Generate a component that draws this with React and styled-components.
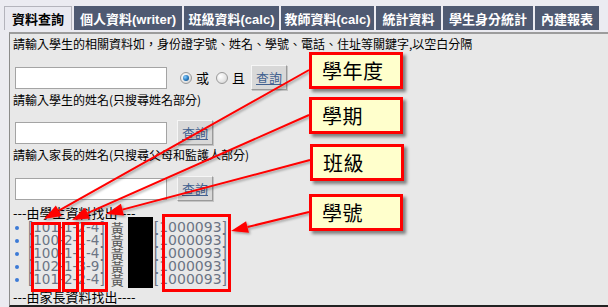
import React from "react";
import styled, { createGlobalStyle } from "styled-components";

const GlobalStyle = createGlobalStyle`
  html, body { margin: 0; padding: 0; background: #e6e6ea; }
  body { font-family: "Noto Sans CJK TC", "Liberation Sans", sans-serif; }
`;

const Page = styled.div`
  position: relative;
  width: 608px;
  height: 307px;
  overflow: hidden;
  background: #ebebf1;
  display: flex;
  flex-direction: column;
`;

const TabBar = styled.div`
  display: flex;
  gap: 2px;
  padding: 6px 0 0 4px;
  height: 24px;
`;

const Tab = styled.div`
  width: ${(p) => p.$w}px;
  height: 24px;
  box-sizing: border-box;
  display: flex;
  align-items: center;
  justify-content: center;
  font-family: "Liberation Sans", "Noto Sans CJK TC", sans-serif;
  font-weight: 700;
  font-size: 13px;
  white-space: nowrap;
  background: ${(p) => (p.$active ? "#e9e9f0" : "#4f5a72")};
  color: ${(p) => (p.$active ? "#000" : "#fff")};
  border: 1px solid ${(p) => (p.$active ? "#b4b4bc" : "#4f5a72")};
  border-bottom: none;
`;

const Panel = styled.div`
  flex: 1;
  margin: 2px 0 0 9px;
  border-left: 1px solid #8c8c8c;
  border-top: 2px solid #9c9c9c;
  border-bottom: 2px solid #222;
  background: #e8e8e8;
  padding: 2px 0 0 3px;
  font-size: 12px;
  line-height: 16px;
  color: #000;
`;

const Line = styled.div`
  margin-top: ${(p) => p.$mt || 0}px;
  white-space: nowrap;
`;

const SearchRow = styled.div`
  display: flex;
  align-items: center;
  height: 25px;
  margin-top: ${(p) => p.$mt}px;
`;

const TextBox = styled.div`
  width: 152px;
  height: 22px;
  box-sizing: border-box;
  margin-left: 2px;
  background: #fff;
  border: 1px solid #a4a4a4;
`;

const Radio = styled.span`
  display: inline-block;
  width: 12px;
  height: 12px;
  box-sizing: border-box;
  border-radius: 50%;
  border: 1px solid #9a9a9a;
  background: radial-gradient(circle at 35% 35%, #ffffff 0%, #e4e4e4 60%, #c4c4c4 100%);
  margin-left: ${(p) => p.$ml}px;
  position: relative;
  &::after {
    content: "";
    display: ${(p) => (p.$checked ? "block" : "none")};
    position: absolute;
    left: 2px;
    top: 2px;
    width: 6px;
    height: 6px;
    border-radius: 50%;
    background: radial-gradient(circle at 35% 35%, #8fd0ff 0%, #2c7fc4 50%, #0b3f70 100%);
  }
`;

const RadioLabel = styled.span`
  margin-left: 4px;
  font-size: 13px;
`;

const QueryButton = styled.div`
  width: 36px;
  height: 25px;
  box-sizing: border-box;
  margin-left: ${(p) => p.$ml}px;
  display: flex;
  align-items: center;
  justify-content: center;
  background: #d8d8d8;
  border: 1px solid;
  border-color: #f6f6f6 #9a9a9a #9a9a9a #f6f6f6;
  box-shadow: 1px 1px 0 #c4c4c4;
  color: #41608f;
  font-size: 13px;
  text-decoration: underline;
`;

const Heading = styled.div`
  margin-top: ${(p) => p.$mt}px;
  font-size: 13px;
  line-height: 16px;
  white-space: nowrap;
`;

const List = styled.div`
  display: flex;
  flex-direction: column;
`;

const ListRow = styled.div`
  display: flex;
  align-items: center;
  height: 13px;
  line-height: 13px;
  white-space: nowrap;
  font-family: "DejaVu Sans", "Noto Sans CJK TC", sans-serif;
  color: #6b7484;
`;

const Dot = styled.span`
  width: 4px;
  height: 4px;
  border-radius: 50%;
  background: #3c7ad6;
  margin: 0 9px 0 2px;
  flex: none;
`;

const Code = styled.span`
  font-size: ${(p) => p.$size}px;
`;

const Name = styled.span`
  margin-left: 6px;
  font-family: "Noto Sans CJK TC", sans-serif;
  font-size: 13px;
  color: #555;
`;

const NameHidden = styled.span`
  display: inline-block;
  width: 30px;
  flex: none;
`;

const Redaction = styled.div`
  position: absolute;
  left: 128px;
  top: 217px;
  width: 25px;
  height: 71px;
  background: #000;
`;

const RedFrame = styled.div`
  position: absolute;
  box-sizing: border-box;
  border: 3px solid #ff0000;
  left: ${(p) => p.$x}px;
  top: ${(p) => p.$y}px;
  width: ${(p) => p.$w}px;
  height: ${(p) => p.$h}px;
`;

const Callout = styled.div`
  position: absolute;
  box-sizing: border-box;
  left: ${(p) => p.$x}px;
  top: ${(p) => p.$y}px;
  width: 94px;
  height: 37px;
  border: 3px solid #ff0000;
  background: #ffffcc;
  box-shadow: 3px 3px 3px rgba(0, 0, 0, 0.45);
  padding-left: 10px;
  display: flex;
  align-items: center;
  font-family: "Noto Sans CJK TC", serif;
  font-size: 20px;
  color: #000;
  letter-spacing: 0.5px;
`;

const ArrowLayer = styled.svg`
  position: absolute;
  left: 0;
  top: 0;
  pointer-events: none;
`;

const tabs = [
  { label: "資料查詢", w: 68, active: true },
  { label: "個人資料(writer)", w: 108 },
  { label: "班級資料(calc)", w: 95 },
  { label: "教師資料(calc)", w: 93 },
  { label: "統計資料", w: 65 },
  { label: "學生身分統計", w: 90 },
  { label: "內建報表", w: 64 },
];

const rows = ["101-1-2-4", "100-2-1-4", "100-1-1-4", "102-1-3-9", "101-2-2-4"];

const arrows = [
  { x1: 309, y1: 70, x2: 44, y2: 219 },
  { x1: 309, y1: 115, x2: 72, y2: 220 },
  { x1: 310, y1: 160, x2: 106, y2: 214 },
  { x1: 309, y1: 212, x2: 231, y2: 231 },
];

function Arrow({ x1, y1, x2, y2 }) {
  const ang = Math.atan2(y2 - y1, x2 - x1);
  const len = 17;
  const half = 6;
  const bx = x2 - len * Math.cos(ang);
  const by = y2 - len * Math.sin(ang);
  const px = -Math.sin(ang) * half;
  const py = Math.cos(ang) * half;
  const pts = `${x2},${y2} ${bx + px},${by + py} ${bx - px},${by - py}`;
  return (
    <g filter="url(#shadow)">
      <line x1={x1} y1={y1} x2={bx} y2={by} stroke="#ff0000" strokeWidth="2" />
      <polygon points={pts} fill="#ff0000" />
    </g>
  );
}

export default function App() {
  return (
    <>
      <GlobalStyle />
      <Page>
        <TabBar>
          {tabs.map((t) => (
            <Tab key={t.label} $w={t.w} $active={t.active}>
              {t.label}
            </Tab>
          ))}
        </TabBar>
        <Panel>
          <Line>請輸入學生的相關資料如，身份證字號、姓名、學號、電話、住址等關鍵字,以空白分隔</Line>
          <SearchRow $mt={13}>
            <TextBox />
            <Radio $ml={13} $checked />
            <RadioLabel>或</RadioLabel>
            <Radio $ml={7} />
            <RadioLabel>且</RadioLabel>
            <QueryButton $ml={6}>查詢</QueryButton>
          </SearchRow>
          <Line $mt={2}>請輸入學生的姓名(只搜尋姓名部分)</Line>
          <SearchRow $mt={12}>
            <TextBox />
            <QueryButton $ml={10}>查詢</QueryButton>
          </SearchRow>
          <Line $mt={2}>請輸入家長的姓名(只搜尋父母和監護人部分)</Line>
          <SearchRow $mt={13}>
            <TextBox />
            <QueryButton $ml={10}>查詢</QueryButton>
          </SearchRow>
          <Heading $mt={4}>---由學生資料找出----</Heading>
          <List>
            {rows.map((r, i) => (
              <ListRow key={i}>
                <Dot />
                <Code $size={13.5}>[{r}]</Code>
                <Name>黃</Name>
                <NameHidden />
                <Code $size={14}>[1000093]</Code>
              </ListRow>
            ))}
          </List>
          <Heading $mt={3}>---由家長資料找出----</Heading>
        </Panel>

        <Redaction />
        <RedFrame $x={31} $y={222} $w={30} $h={70} />
        <RedFrame $x={62} $y={222} $w={17} $h={70} />
        <RedFrame $x={81} $y={222} $w={27} $h={70} />
        <RedFrame $x={162} $y={214} $w={69} $h={78} />

        <ArrowLayer width="608" height="307" viewBox="0 0 608 307">
          <defs>
            <filter id="shadow" x="-10%" y="-10%" width="130%" height="130%">
              <feDropShadow dx="1.5" dy="1.5" stdDeviation="1" floodColor="#000" floodOpacity="0.35" />
            </filter>
          </defs>
          {arrows.map((a, i) => (
            <Arrow key={i} {...a} />
          ))}
        </ArrowLayer>

        <Callout $x={309} $y={52}>學年度</Callout>
        <Callout $x={309} $y={97}>學期</Callout>
        <Callout $x={310} $y={144}>班級</Callout>
        <Callout $x={309} $y={194}>學號</Callout>
      </Page>
    </>
  );
}
